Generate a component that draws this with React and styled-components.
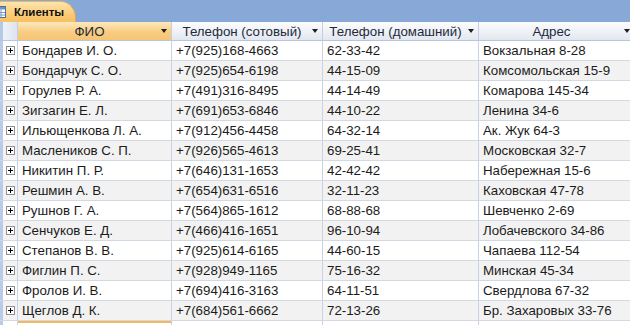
import React from "react";
import styled, { createGlobalStyle } from "styled-components";

const GlobalStyle = createGlobalStyle`
  html, body {
    margin: 0;
    padding: 0;
    background: #ffffff;
    font-family: "Liberation Sans", Arial, sans-serif;
  }
`;

const columns = [
  { key: "fio", title: "ФИО", width: 154 },
  { key: "mobile", title: "Телефон (сотовый)", width: 151 },
  { key: "home", title: "Телефон (домашний)", width: 156 },
  { key: "addr", title: "Адрес", width: 156 },
];

const rows = [
  ["Бондарев И. О.", "+7(925)168-4663", "62-33-42", "Вокзальная 8-28"],
  ["Бондарчук С. О.", "+7(925)654-6198", "44-15-09", "Комсомольская 15-9"],
  ["Горулев Р. А.", "+7(491)316-8495", "44-14-49", "Комарова 145-34"],
  ["Зигзагин Е. Л.", "+7(691)653-6846", "44-10-22", "Ленина 34-6"],
  ["Ильющенкова Л. А.", "+7(912)456-4458", "64-32-14", "Ак. Жук 64-3"],
  ["Маслеников С. П.", "+7(926)565-4613", "69-25-41", "Московская 32-7"],
  ["Никитин П. Р.", "+7(646)131-1653", "42-42-42", "Набережная 15-6"],
  ["Решмин А. В.", "+7(654)631-6516", "32-11-23", "Каховская 47-78"],
  ["Рушнов Г. А.", "+7(564)865-1612", "68-88-68", "Шевченко 2-69"],
  ["Сенчуков Е. Д.", "+7(466)416-1651", "96-10-94", "Лобачевского 34-86"],
  ["Степанов В. В.", "+7(925)614-6165", "44-60-15", "Чапаева 112-54"],
  ["Фиглин П. С.", "+7(928)949-1165", "75-16-32", "Минская 45-34"],
  ["Фролов И. В.", "+7(694)416-3163", "64-11-51", "Свердлова 67-32"],
  ["Щеглов Д. К.", "+7(684)561-6662", "72-13-26", "Бр. Захаровых 33-76"],
];

const gridCols = `18px ${columns.map((c) => c.width + "px").join(" ")}`;

const Window = styled.div`
  width: 630px;
  height: 325px;
  overflow: hidden;
  background: #ffffff;
`;

const TabBar = styled.div`
  height: 22px;
  background: #88a9d8;
  display: flex;
  align-items: flex-end;
`;

const Tab = styled.div`
  height: 21px;
  width: 76px;
  display: flex;
  align-items: center;
  gap: 8px;
  box-sizing: border-box;
  background: linear-gradient(#fde4ad, #f9c870 70%, #f8c062);
  border-top: 1px solid #e7b866;
  border-right: 1px solid #d9a652;
  border-radius: 0 16px 0 0;
  font: bold 11.5px "Liberation Sans", Arial, sans-serif;
  color: #111;
`;

const Grid = styled.div`
  display: grid;
  grid-template-columns: ${gridCols};
`;

const HeadCell = styled.div`
  height: 19px;
  box-sizing: border-box;
  display: flex;
  align-items: center;
  border-right: 1px solid #c3cfe1;
  border-bottom: 1px solid #b9c6da;
  background: ${({ $active }) =>
    $active
      ? "linear-gradient(#fde8bd, #f8cd82 55%, #f6c572)"
      : "linear-gradient(#fbfcfd, #eef1f6 55%, #e2e7ef)"};
  font-size: 13.3px;
  color: #1e2a3c;
  white-space: nowrap;
`;

const SelectorHead = styled(HeadCell)`
  background: linear-gradient(90deg, #b5c8e6 0 3px, #eef2f8 3px, #dde4ef);
`;

const HeadTitle = styled.span`
  flex: 1;
  text-align: center;
  padding-left: 4px;
`;

const Arrow = styled.span`
  width: 14px;
  display: flex;
  justify-content: center;
  &::after {
    content: "";
    border-left: 3.5px solid transparent;
    border-right: 3.5px solid transparent;
    border-top: 4px solid #202020;
  }
`;

const Cell = styled.div`
  height: 20px;
  box-sizing: border-box;
  display: flex;
  align-items: center;
  padding-left: 4px;
  border-right: 1px solid #c7d2e3;
  border-bottom: 1px solid #d3d9e2;
  background: ${({ $odd }) => ($odd ? "#f2f2f2" : "#ffffff")};
  font-size: 13.3px;
  color: #1b1b1b;
  white-space: nowrap;
  overflow: hidden;
`;

const ExpanderCell = styled(Cell)`
  padding-left: 0;
  background: linear-gradient(90deg, #b9cbe7 0 3px, ${({ $odd }) => ($odd ? "#f2f2f2" : "#ffffff")} 3px);
`;

const PlusBox = styled.span`
  width: 9px;
  height: 9px;
  margin-left: 6px;
  box-sizing: border-box;
  border: 1px solid #8d8f91;
  background: #fff;
  position: relative;
  &::before,
  &::after {
    content: "";
    position: absolute;
    background: #000;
  }
  &::before {
    left: 1px;
    top: 3px;
    width: 5px;
    height: 1px;
  }
  &::after {
    left: 3px;
    top: 1px;
    width: 1px;
    height: 5px;
  }
`;

const NewCell = styled.div`
  height: 10px;
  box-sizing: border-box;
  border-right: 1px solid #c7d2e3;
  border-top: ${({ $current }) => ($current ? "2px solid #f7b85a" : "none")};
  background: ${({ $selector }) =>
    $selector ? "linear-gradient(90deg, #b9cbe7 0 3px, #ffffff 3px)" : "#ffffff"};
`;

const TableIcon = () => (
  <svg width="14" height="12" viewBox="0 0 14 12" style={{ marginLeft: -8 }}>
    <rect x="0.5" y="0.5" width="13" height="11" fill="#fff" stroke="#4a6fa5" />
    <rect x="1" y="1" width="12" height="2.5" fill="#6f93c8" />
    <path d="M1 6.5h12M1 9h12M5 3.5v8M9 3.5v8" stroke="#7b97c2" strokeWidth="1" />
  </svg>
);

export default function App() {
  return (
    <>
      <GlobalStyle />
      <Window>
        <TabBar>
          <Tab>
            <TableIcon />
            Клиенты
          </Tab>
        </TabBar>
        <Grid>
          <SelectorHead />
          {columns.map((c, i) => (
            <HeadCell key={c.key} $active={i === 0}>
              <HeadTitle>{c.title}</HeadTitle>
              <Arrow />
            </HeadCell>
          ))}
          {rows.map((r, ri) => (
            <React.Fragment key={ri}>
              <ExpanderCell $odd={ri % 2 === 1}>
                <PlusBox />
              </ExpanderCell>
              {r.map((v, ci) => (
                <Cell key={ci} $odd={ri % 2 === 1}>
                  {v}
                </Cell>
              ))}
            </React.Fragment>
          ))}
          <NewCell $selector />
          <NewCell $current />
          <NewCell />
          <NewCell />
          <NewCell />
        </Grid>
      </Window>
    </>
  );
}
